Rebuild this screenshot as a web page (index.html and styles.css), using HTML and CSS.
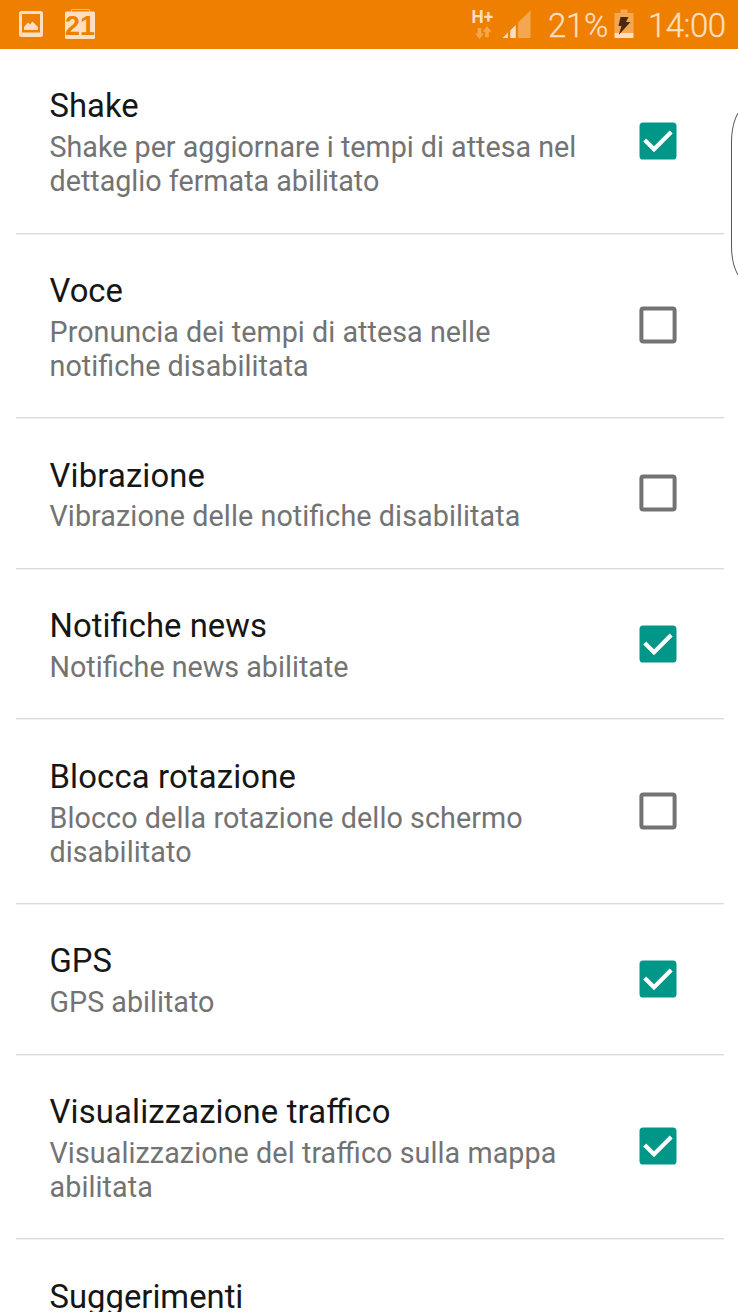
FILE: index.html
```
<!DOCTYPE html>
<html lang="it">
<head>
<meta charset="utf-8">
<title>Impostazioni</title>
<link rel="stylesheet" href="styles.css">
</head>
<body>
<svg class="defs" width="0" height="0" aria-hidden="true">
  <symbol id="checked" viewBox="0 0 38 38">
    <rect x="0.5" y="0.5" width="37" height="37" rx="3.6" fill="#009688"/>
    <path d="M5.700 18 L15 27.200 L32.200 9.900" fill="none" stroke="#fff" stroke-width="4.200"/>
  </symbol>
  <symbol id="unchecked" viewBox="0 0 38 38">
    <rect x="2.400" y="2.400" width="33.200" height="33.200" rx="2" fill="none" stroke="#737373" stroke-width="4"/>
  </symbol>
</svg>
<header class="status">
  <svg class="status-left" width="100" height="49" viewBox="0 0 100 49">
    <path fill="#fbdfc0" fill-rule="evenodd" d="M21.500 11h19a2.500 2.500 0 0 1 2.500 2.500v21a2.500 2.500 0 0 1-2.500 2.500h-19a2.500 2.500 0 0 1-2.500-2.500v-21a2.500 2.500 0 0 1 2.500-2.500zM22 14v18.500h18V14z"/>
    <path fill="#fbdfc0" d="M24 30v-3l4-4.500 2 2 2.500-3 5.500 5.500v3z"/>
    <path d="M71.500 12V9.500h18V12" fill="none" stroke="#f7bd7c" stroke-width="1"/>
    <rect x="65" y="11.500" width="30" height="27.500" rx="1.500" fill="#fbdfc0"/>
    <text class="calendar-day" x="80" y="35" text-anchor="middle" textLength="30" lengthAdjust="spacingAndGlyphs">21</text>
  </svg>
  <div class="status-right">
    <svg class="signal" width="70" height="49" viewBox="0 0 70 49">
      <text class="network" x="0.500" y="22.800" textLength="21.500" lengthAdjust="spacingAndGlyphs">H+</text>
      <g fill="#f5a74f">
        <path d="M6.700 28h3.600v5.500H13l-4.500 5.500L4 33.500h2.700z"/>
        <path d="M14.200 37.300h3.600v-5.500h2.700L16 26.300l-4.500 5.500h2.700z"/>
        <path d="M47 38V22.500L59.500 10.500V38z"/>
      </g>
      <path fill="#fbdfc0" d="M31.500 38l5.500-5.500V38zM39.200 38v-7.500l5.600-5.500v13z"/>
    </svg>
    <span class="percent">21%</span>
    <svg class="battery" width="20" height="49" viewBox="0 0 20 49">
      <path fill="#f5a74f" d="M0.500 13h6V9.500h7V13h6v20h-19z"/>
      <path fill="#fbdfc0" d="M0.500 33h19v5h-19z"/>
      <path fill="#4a2a0b" d="M6.500 17h8l-2.500 5h4.500L4.700 35l2.800-9H4.500z"/>
    </svg>
    <span class="clock">14:00</span>
  </div>
</header>
<main class="list">
  <section class="row two-line"><div class="text"><h2>Shake</h2><p>Shake per aggiornare i tempi di attesa nel<br>dettaglio fermata abilitato</p></div><svg class="box"><use href="#checked"/></svg></section>
  <section class="row two-line"><div class="text"><h2>Voce</h2><p class="loose">Pronuncia dei tempi di attesa nelle<br>notifiche disabilitata</p></div><svg class="box"><use href="#unchecked"/></svg></section>
  <section class="row"><div class="text"><h2 class="loosest">Vibrazione</h2><p class="looser">Vibrazione delle notifiche disabilitata</p></div><svg class="box"><use href="#unchecked"/></svg></section>
  <section class="row"><div class="text"><h2 class="loose">Notifiche news</h2><p>Notifiche news abilitate</p></div><svg class="box"><use href="#checked"/></svg></section>
  <section class="row two-line"><div class="text"><h2 class="loosest">Blocca rotazione</h2><p class="looser">Blocco della rotazione dello schermo<br>disabilitato</p></div><svg class="box"><use href="#unchecked"/></svg></section>
  <section class="row"><div class="text"><h2>GPS</h2><p>GPS abilitato</p></div><svg class="box"><use href="#checked"/></svg></section>
  <section class="row two-line"><div class="text"><h2 class="loosest">Visualizzazione traffico</h2><p class="looser">Visualizzazione del traffico sulla mappa<br>abilitata</p></div><svg class="box"><use href="#checked"/></svg></section>
  <section class="row"><div class="text"><h2>Suggerimenti</h2></div></section>
</main>
<div class="edge-handle"></div>
</body>
</html>
```
FILE: styles.css
```
* { box-sizing: border-box; }
html { overflow: hidden; }
body {
  margin: 0;
  width: 738px;
  height: 1312px;
  overflow: hidden;
  position: relative;
  background: #fff;
  font-family: Roboto, sans-serif;
}
.defs { position: absolute; }
.status {
  height: 49px;
  display: flex;
  justify-content: space-between;
  background: #ef7f00;
  color: #fbdfc0;
}
.status svg { display: block; flex: none; }
.calendar-day { font: bold 28px "Liberation Sans", sans-serif; fill: #ef7f00; }
.network { font: bold 18px Roboto, sans-serif; fill: #fbdfc0; }
.status-right {
  display: flex;
  padding-right: 13px;
  font-size: 33px;
  font-weight: 300;
  line-height: 52px;
  -webkit-text-stroke: 0.3px #fbdfc0;
}
.status-right svg { -webkit-text-stroke: 0; }
.signal { margin-left: -1px; }
.percent { width: 59px; margin-left: 7px; white-space: nowrap; letter-spacing: -0.3px; }
.battery { margin-left: 7px; }
.clock { width: 77px; margin-left: 14px; white-space: nowrap; letter-spacing: -0.5px; }
.list { height: 1263px; overflow: hidden; padding: 0 14px 0 16px; }
.row {
  height: 150.6px;
  display: flex;
  justify-content: space-between;
  align-items: center;
  padding: 0 47.500px 0 33.500px;
  border-bottom: 1px solid #dadada;
  box-shadow: 0 1px #f1f1f1;
}
.row:last-child { height: 73px; border-bottom: 0; box-shadow: none; }
.two-line { height: 184.600px; }
.text { align-self: flex-start; padding-top: 37.400px; white-space: nowrap; }
h2 {
  margin: 0;
  font-size: 32.800px;
  font-weight: 400;
  line-height: 40px;
  color: #161616;
}
p {
  margin: 3.800px 0 0;
  font-size: 28.700px;
  line-height: 34.200px;
  color: #737373;
}
h2, p { font-feature-settings: "liga" 1; }
.loose { letter-spacing: 0.05px; }
.looser { letter-spacing: 0.085px; }
.loosest { letter-spacing: 0.16px; }
.box { width: 38px; height: 38px; flex: none; }
.edge-handle {
  position: absolute;
  left: 731px;
  top: 108px;
  width: 40px;
  height: 172px;
  border: 1px solid #555;
  border-radius: 14px / 34px;
  background: #fff;
}
```
